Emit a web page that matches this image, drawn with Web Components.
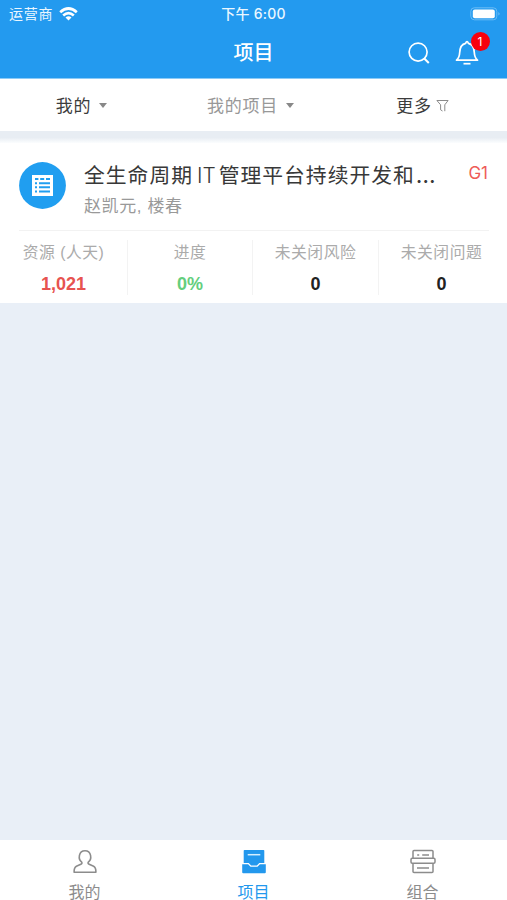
<!DOCTYPE html>
<html lang="zh-CN">
<head>
<meta charset="utf-8">
<title>项目</title>
<style>
html,body{margin:0;height:100%}
body{font-family:"Liberation Sans","Noto Sans CJK SC",sans-serif;overflow:hidden}
</style>
</head>
<body>
<project-app></project-app>
<script>
const define = (name, html) => customElements.define(name, class extends HTMLElement {
  constructor() {
    super();
    this.attachShadow({mode: 'open'}).innerHTML = html;
  }
});

define('status-bar', `<style>
:host{display:grid;grid-template-columns:1fr auto 1fr;height:27px;align-items:center;color:#eaf7ff;font:14px/27px Inter,"Noto Sans CJK SC",sans-serif}
.l{display:flex;align-items:center;gap:6px;padding-left:9px;letter-spacing:.8px}
.t{font-weight:500;font-size:14px;letter-spacing:.25px;white-space:pre}
.r{display:flex;justify-content:flex-end;padding-right:6px}
svg{display:block}
</style>
<div class="l"><span>运营商</span><svg width="19" height="14" viewBox="0 0 19 14" fill="none" stroke="#fff" stroke-width="2.7"><path d="M1.2 5.2Q9.5-2.2 17.8 5.2M4.2 8.5Q9.5 3.8 14.8 8.5"/><path d="M9.5 13.6 6.5 10.6Q9.5 8 12.5 10.6Z" fill="#fff" stroke="none"/></svg></div>
<div class="t">下午 6:00</div>
<div class="r"><svg width="31" height="14" viewBox="0 0 31 14"><rect x=".8" y=".8" width="26" height="12" rx="3.5" fill="none" stroke="#6bbcf6"/><rect x="2.8" y="2.5" width="22" height="8.8" rx="2" fill="#fff"/><path d="M28.5 5q2 1.8 0 3.6z" fill="#85c6f8"/></svg></div>`);

define('nav-bar', `<style>
:host{display:grid;grid-template-columns:1fr auto 1fr;height:52px;align-items:center;color:#fff}
h1{grid-column:2;margin:0;font-weight:500;font-size:20px;line-height:52px}
.a{display:flex;justify-content:flex-end;gap:24px;padding-right:28px}
svg{display:block}
.b{position:relative}
.n{position:absolute;left:15.5px;top:-8px;width:19px;height:19px;border-radius:50%;background:#f8000c;font:12px/19px Inter,sans-serif;text-align:center}
</style>
<h1>项目</h1>
<div class="a">
<svg width="24" height="26" viewBox="0 0 24 26" fill="none" stroke="#fff" stroke-width="1.7"><circle cx="11.1" cy="12.1" r="9"/><path d="m17.3 18.5 4.5 4.5" stroke-width="2"/></svg>
<div class="b"><svg width="24" height="26" viewBox="0 0 24 26" fill="none" stroke="#fff" stroke-width="1.7"><path d="M1.5 20.2H22.5Q19.6 17.8 19.3 12.5C19 6.7 16.4 4 13.4 3.4Q12-.2 10.6 3.4C7.6 4 5 6.7 4.7 12.5Q4.4 17.8 1.5 20.2Z" stroke-linejoin="round"/><path d="M8.5 23.7h7"/></svg><span class="n">1</span></div>
</div>`);

define('filter-item', `<style>
:host{display:flex;align-items:center;justify-content:center;color:#3c3c3c;font-size:17px;letter-spacing:.75px;line-height:49px;height:52px;padding-top:3px;box-sizing:border-box}
:host([muted]){color:#989898}
i{width:0;border:4.5px solid transparent;border-top:5px solid #888;border-bottom:0;margin:-2px 0 0 8px}
svg{display:none;margin:-2px 0 0 4px}
:host([more]) i{display:none}
:host([more]) svg{display:block}
</style><slot></slot><i></i><svg width="13" height="13" viewBox="0 0 13 13" fill="none" stroke="#8a8a8a"><path d="M.9 1.5h11.2L8.8 5.8v6.4M.9 1.5 4.6 5.8v5L6.5 12"/></svg>`);

define('metric-cell', `<style>
:host{display:block;text-align:center;color:#222;height:55px}
:host(:not(:last-child)){border-right:1px solid #f3f3f3}
:host([red]){color:#e75350}:host([green]){color:#64ce7d}
.k{color:#ababab;font-size:15.8px;line-height:24px;letter-spacing:.5px;white-space:nowrap;padding-top:1px}
.v{font-weight:bold;font-size:18px;line-height:24px;margin-top:7px}
</style><div class="k"><slot name="label"></slot></div><div class="v"><slot></slot></div>`);

define('project-card', `<style>
:host{display:block;height:160px;background:#fff;padding:0 18px 0 19px;box-sizing:border-box}
.h{display:flex;height:87px;border-bottom:1px solid #f2f2f2}
.ico{width:47px;height:47px;margin-top:19px;flex:none}
.x{flex:1;min-width:0;margin-left:18px;padding-top:17px;white-space:nowrap}
.t{display:flex;font-size:20.8px;line-height:32px;color:#383838;letter-spacing:1px}
.s{font-size:17px;line-height:28px;margin-top:1px;color:#999;letter-spacing:.6px}
.g{color:#ee5b58;font:17px/22px Inter,sans-serif;padding:19px 1px 0 0}
.m{display:grid;grid-template-columns:128px 125px 126px 125px;padding-top:9px;margin:0 -18px 0 -19px}
</style>
<div class="h">
<svg class="ico" viewBox="0 0 47 47"><circle cx="23.5" cy="23.5" r="23.4" fill="#209ef0"/><path fill="#fff" d="M13 13h21v21H13z"/><path d="M16 17h3.4m1.8 0h4m1.8 0h4M16 21.2h2m2 0h11M16 25.2h2m2 0h11M16 29.4h2m2 0h11" stroke="#209ef0" stroke-width="2"/></svg>
<div class="x"><div class="t"><slot name="title"></slot></div><div class="s"><slot name="people"></slot></div></div>
<div class="g"><slot name="stage"></slot></div>
</div>
<div class="m"><slot></slot></div>`);

define('tab-item', `<style>
:host{display:flex;flex-direction:column;align-items:center;color:#8c8c8c;font-size:16px;line-height:24px;padding-top:8px}
:host([active]){color:#2398ed}
::slotted(svg){display:block;margin-bottom:7px}
</style><slot name="icon"></slot><slot></slot>`);

define('project-app', `<style>
:host{display:flex;flex-direction:column;height:900px;background:#e9eff7}
header{background:linear-gradient(#239aef 78.5px,#8ccbf7 78.5px);height:79px;flex:none}
.f{display:grid;grid-template-columns:163px 175px 169px;height:52px;background:#fff;flex:none}
.gap{height:12px;flex:none;background:linear-gradient(#e8edf3 55%,#fbfdfe)}
nav{margin-top:auto;display:grid;grid-template-columns:repeat(3,1fr);height:60px;background:#fff}
.it{font-family:Inter,sans-serif;font-weight:300;margin:0 3px 0 4px;letter-spacing:0}
.e{font-family:Inter,sans-serif;letter-spacing:0;font-size:23px;margin-left:1px;line-height:1}
</style>
<header><status-bar></status-bar><nav-bar></nav-bar></header>
<div class="f"><filter-item>我的</filter-item><filter-item muted>我的项目</filter-item><filter-item more>更多</filter-item></div>
<div class="gap"></div>
<project-card>
<span slot="title">全生命周期<span class="it">IT</span>管理平台持续开发和<span class="e">…</span></span>
<span slot="people">赵凯元, 楼春</span><span slot="stage">G1</span>
<metric-cell red><span slot="label">资源 (人天)</span>1,021</metric-cell>
<metric-cell green><span slot="label">进度</span>0%</metric-cell>
<metric-cell><span slot="label">未关闭风险</span>0</metric-cell>
<metric-cell><span slot="label">未关闭问题</span>0</metric-cell>
</project-card>
<nav>
<tab-item><svg slot="icon" width="26" height="26" viewBox="0 0 26 26" fill="none" stroke="#8c8c8c" stroke-width="1.6"><path d="M9.7 14.2C5.8 11.2 6.5 2.8 13 2.8s7.2 8.4 3.3 11.4q-.8 1.4.9 2l4.4 2Q24 19.4 23.9 24.2H2.1Q2 19.4 4.4 18.2l4.4-2q1.7-.6.9-2Z" stroke-linejoin="round"/></svg>我的</tab-item>
<tab-item active><svg slot="icon" width="26" height="26" viewBox="0 0 26 26"><path d="M3.5 2h19q.8 0 .8.8V15h-5l-2.4 2.4h-5.8L7.7 15h-5V2.8q0-.8.8-.8ZM1.2 16.3h5.9l2.4 2.4h7l2.4-2.4h5.9v8q0 1-1 1H2.2q-1 0-1-1Z" fill="#2398ed"/><path d="M6.7 6.7h12.6" stroke="#d5efff" stroke-width="1.5"/></svg>项目</tab-item>
<tab-item><svg slot="icon" width="26" height="26" viewBox="0 0 26 26" fill="none" stroke="#8c8c8c" stroke-width="1.5"><path d="M3 10V3.5q0-1 1-1h18q1 0 1 1V10M3 15.5v8q0 1 1 1h18q1 0 1-1v-8"/><rect x="1" y="10.3" width="24" height="5" rx="1.2"/><path d="M7.2 6.9h2m3 0h6.8M7 19.9h12"/></svg>组合</tab-item>
</nav>`);
</script>
</body>
</html>
